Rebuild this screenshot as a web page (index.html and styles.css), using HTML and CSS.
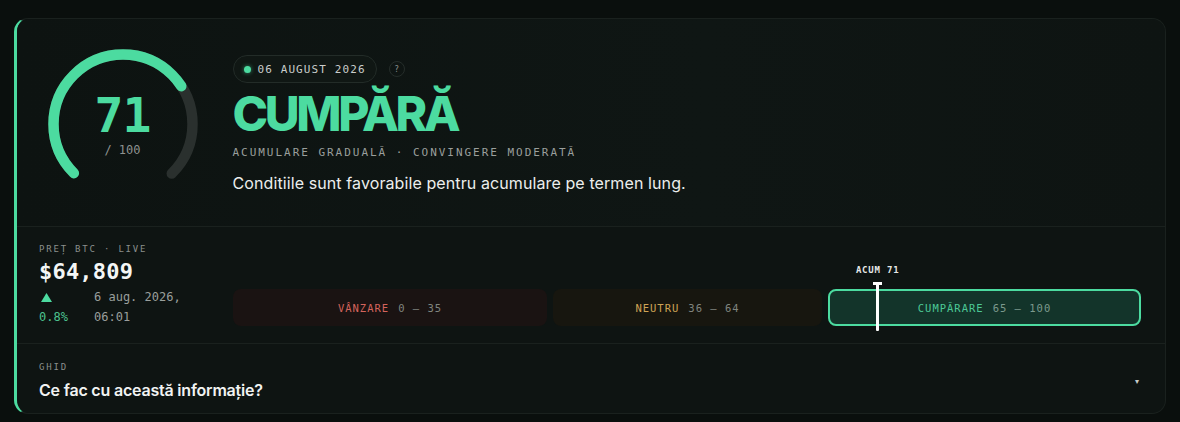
FILE: index.html
```html
<!DOCTYPE html>
<html lang="ro">
<head>
<meta charset="utf-8">
<link rel="stylesheet" href="styles.css">
</head>
<body>
<div class="card">
  <section class="top">
    <div class="gauge">
      <svg class="gauge-svg" width="160" height="160" viewBox="0 0 160 160">
        <circle cx="80" cy="80" r="69.5" fill="none" stroke="#2a302e" stroke-width="10.5" stroke-linecap="round" stroke-dasharray="327.51 436.68" transform="rotate(135 80 80)"/>
        <circle cx="80" cy="80" r="69.5" fill="none" stroke="#4cdba0" stroke-width="10.5" stroke-linecap="round" stroke-dasharray="232.53 436.68" transform="rotate(135 80 80)"/>
      </svg>
      <div class="gauge-text">
        <div class="gauge-num">71</div>
        <div class="gauge-max">/ 100</div>
      </div>
    </div>
    <div class="info">
      <div class="pill-row">
        <div class="pill"><span class="dot"></span>06 AUGUST 2026</div>
        <div class="help">?</div>
      </div>
      <h1 class="verdict">CUMPĂRĂ</h1>
      <div class="subtitle">ACUMULARE GRADUALĂ · CONVINGERE MODERATĂ</div>
      <p class="desc">Conditiile sunt favorabile pentru acumulare pe termen lung.</p>
    </div>
  </section>
  <section class="mid">
    <div class="price">
      <div class="label">PREȚ BTC · LIVE</div>
      <div class="amount">$64,809</div>
      <div class="change-row">
        <div class="change">
          <span class="arrow"><svg width="11" height="9" viewBox="0 0 11 9"><path d="M5.5 0 L11 9 L0 9 Z" fill="#4cdba0"/></svg></span>
          <span>0.8%</span>
        </div>
        <div class="when">6 aug. 2026, 06:01</div>
      </div>
    </div>
    <div class="scale">
      <div class="track">
        <div class="seg sell"><span class="seg-name">VÂNZARE</span><span class="seg-range">0 – 35</span></div>
        <div class="seg neutral"><span class="seg-name">NEUTRU</span><span class="seg-range">36 – 64</span></div>
        <div class="seg buy"><span class="seg-name">CUMPĂRARE</span><span class="seg-range">65 – 100</span></div>
        <div class="marker" style="left: 71%;">
          <span class="marker-label">ACUM 71</span>
          <span class="marker-line"></span>
        </div>
      </div>
    </div>
  </section>
  <section class="guide">
    <div class="guide-text">
      <div class="label">GHID</div>
      <div class="question">Ce fac cu această informație?</div>
    </div>
    <span class="caret">▾</span>
  </section>
</div>
</body>
</html>
```

FILE: styles.css
```css
* { box-sizing: border-box; }
html, body { margin: 0; }
body {
  background: #0a0f0d;
  padding: 18px 14px 8px 14px;
  font-family: Inter, "Noto Sans", sans-serif;
  color: #e8ebe9;
}
.card {
  width: 1152px;
  height: 396px;
  background: #0e1412;
  border: 1px solid #1a211e;
  border-left: 3px solid #4cdba0;
  border-radius: 14px;
  overflow: hidden;
}
.top {
  display: flex;
  padding: 25px 0 22px 26px;
  background: linear-gradient(90deg, #0d1311 0%, #0f1614 60%, #0e1412 100%);
}
.gauge {
  display: grid;
  width: 160px;
  height: 160px;
  place-items: center;
  margin-left: -0.5px;
}
.gauge > * { grid-area: 1 / 1; }
.gauge-text {
  display: flex;
  flex-direction: column;
  align-items: center;
  margin-top: 0;
}
.gauge-num {
  font-family: "DejaVu Sans Mono", monospace;
  font-weight: 700;
  font-size: 48px;
  line-height: 48px;
  color: #4cdba0;
  letter-spacing: -1px;
}
.gauge-max {
  font-family: "DejaVu Sans Mono", monospace;
  font-size: 12px;
  line-height: 16px;
  color: #8d928f;
  margin-top: 3px;
}
.info {
  margin-left: 30px;
  margin-top: 11px;
}
.pill-row {
  display: flex;
  align-items: center;
  gap: 12px;
}
.pill {
  display: flex;
  align-items: center;
  height: 28px;
  padding: 0 10px 0 10px;
  border: 1px solid #232c28;
  border-radius: 14px;
  background: #101714;
  font-family: "DejaVu Sans Mono", monospace;
  font-size: 11px;
  letter-spacing: 1.1px;
  color: #c9cdcb;
}
.dot {
  width: 7px;
  height: 7px;
  border-radius: 50%;
  background: #4cdba0;
  box-shadow: 0 0 4px rgba(76, 219, 160, 0.6);
  margin-right: 7px;
}
.help {
  width: 16px;
  height: 16px;
  border: 1px solid #252d2a;
  border-radius: 50%;
  display: flex;
  align-items: center;
  justify-content: center;
  font-family: "DejaVu Sans Mono", monospace;
  font-size: 8px;
  color: #8d928f;
}
.verdict {
  margin: 7px 0 0 0;
  font-family: Inter, sans-serif;
  font-weight: 800;
  font-size: 48px;
  line-height: 48px;
  letter-spacing: -3.4px;
  color: #4cdba0;
}
.subtitle {
  margin-top: 7px;
  font-family: "DejaVu Sans Mono", monospace;
  font-size: 11px;
  line-height: 16px;
  letter-spacing: 1.97px;
  color: #9a9f9c;
}
.desc {
  margin: 11px 0 0 0;
  font-size: 16px;
  line-height: 22px;
  color: #eceeed;
  letter-spacing: 0.1px;
}
.mid {
  display: flex;
  border-top: 1px solid #1a211e;
  border-bottom: 1px solid #1a211e;
  height: 118px;
  padding: 0 24px 0 22px;
}
.price {
  width: 194px;
  padding-top: 15px;
}
.label {
  font-family: "DejaVu Sans Mono", monospace;
  font-size: 9px;
  line-height: 14px;
  letter-spacing: 1.8px;
  color: #8a8f8c;
}
.amount {
  margin-top: 2px;
  font-family: "DejaVu Sans Mono", monospace;
  font-weight: 700;
  font-size: 22px;
  line-height: 28px;
  color: #f4f6f5;
  letter-spacing: 0.2px;
}
.change-row {
  display: flex;
  margin-top: 1px;
  font-family: "DejaVu Sans Mono", monospace;
  font-size: 12px;
  line-height: 20px;
}
.change {
  display: flex;
  flex-direction: column;
  width: 55px;
  color: #4cc28f;
}
.arrow {
  display: flex;
  align-items: center;
  height: 20px;
  padding-left: 2px;
}
.when {
  width: 100px;
  color: #9a9f9c;
}
.scale {
  flex: 1;
  padding-top: 62px;
}
.track {
  position: relative;
  display: grid;
  grid-template-columns: 314fr 269fr 313fr;
  gap: 6px;
  height: 37px;
}
.seg {
  display: flex;
  align-items: center;
  justify-content: center;
  gap: 9px;
  border-radius: 8px;
  font-family: "DejaVu Sans Mono", monospace;
  font-size: 10.5px;
  letter-spacing: 1px;
}
.seg-range { color: #80857f; }
.sell { background: #1a1312; }
.sell .seg-name { color: #d4645c; }
.neutral { background: #17160f; }
.neutral .seg-name { color: #cfa455; }
.buy {
  background: #13342a;
  border: 2px solid #4cdba0;
}
.buy .seg-name { color: #4cc896; }
.buy .seg-range { color: #7c9a8d; }
.marker {
  position: absolute;
  top: -25px;
  width: 0;
  display: flex;
  flex-direction: column;
  align-items: center;
}
.marker-label {
  white-space: nowrap;
  font-family: "DejaVu Sans Mono", monospace;
  font-weight: 700;
  font-size: 9px;
  line-height: 12px;
  letter-spacing: 0.8px;
  color: #e6e8e7;
  margin-bottom: 6px;
}
.marker-line {
  position: relative;
  width: 3px;
  height: 49px;
  background: #ffffff;
  border-radius: 1px;
}
.marker-line::before {
  content: "";
  position: absolute;
  top: 0;
  left: -3px;
  width: 9px;
  height: 3px;
  background: #ffffff;
}
.guide {
  display: flex;
  align-items: center;
  justify-content: space-between;
  padding: 16px 26px 14px 22px;
}
.question {
  margin-top: 5px;
  font-size: 16px;
  line-height: 22px;
  font-weight: 600;
  color: #f1f3f2;
  letter-spacing: -0.2px;
}
.caret {
  font-size: 8px;
  color: #c8ccca;
}
```
